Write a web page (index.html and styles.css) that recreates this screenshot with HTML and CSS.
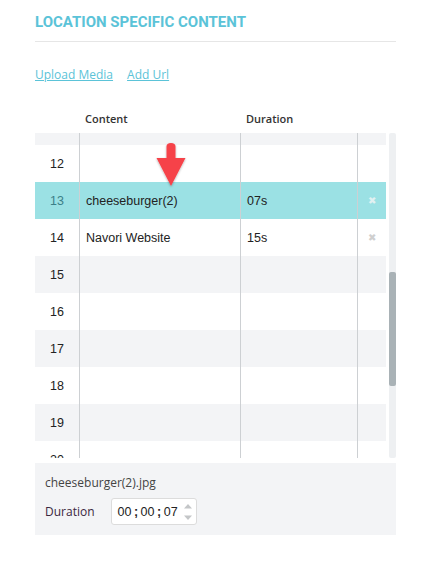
FILE: index.html
```html
<!DOCTYPE html>
<html lang="en">
<head>
    <meta charset="UTF-8">
    <meta name="viewport" content="width=device-width, initial-scale=1.0">
    <title>Location Specific Content</title>
    <link rel="stylesheet" href="styles.css">
</head>
<body>
    <div class="panel">
        <h2 class="title">LOCATION SPECIFIC CONTENT</h2>
        <div class="actions">
            <a href="#">Upload Media</a>
            <a href="#">Add Url</a>
        </div>

        <div class="grid">
            <div class="grid-main">
                <div class="head">
                    <div class="cell num"></div>
                    <div class="cell">Content</div>
                    <div class="cell">Duration</div>
                    <div class="cell act"></div>
                </div>
                <div class="viewport">
                    <div class="rows">
                        <div class="row alt"><div class="cell num"></div><div class="cell"></div><div class="cell"></div><div class="cell act"></div></div>
                        <div class="row"><div class="cell num">12</div><div class="cell"></div><div class="cell"></div><div class="cell act"></div></div>
                        <div class="row selected"><div class="cell num">13</div><div class="cell">cheeseburger(2)</div><div class="cell">07s</div><div class="cell act"><span class="remove">&#10006;</span></div></div>
                        <div class="row"><div class="cell num">14</div><div class="cell">Navori Website</div><div class="cell">15s</div><div class="cell act"><span class="remove">&#10006;</span></div></div>
                        <div class="row alt"><div class="cell num">15</div><div class="cell"></div><div class="cell"></div><div class="cell act"></div></div>
                        <div class="row"><div class="cell num">16</div><div class="cell"></div><div class="cell"></div><div class="cell act"></div></div>
                        <div class="row alt"><div class="cell num">17</div><div class="cell"></div><div class="cell"></div><div class="cell act"></div></div>
                        <div class="row"><div class="cell num">18</div><div class="cell"></div><div class="cell"></div><div class="cell act"></div></div>
                        <div class="row alt"><div class="cell num">19</div><div class="cell"></div><div class="cell"></div><div class="cell act"></div></div>
                        <div class="row"><div class="cell num">20</div><div class="cell"></div><div class="cell"></div><div class="cell act"></div></div>
                    </div>
                    <svg class="pointer" width="32" height="48" viewBox="0 0 32 48">
                        <defs>
                            <filter id="shadow" x="-30%" y="-30%" width="160%" height="160%">
                                <feDropShadow dx="0" dy="1" stdDeviation="1" flood-color="#000" flood-opacity="0.3"/>
                            </filter>
                        </defs>
                        <path d="M11.5 5.5 Q11.5 2 16 2 Q20.5 2 20.5 5.5 L20.5 17 L30.5 17 L16 45 L1.5 17 L11.5 17 Z" fill="#f6434a" filter="url(#shadow)"/>
                    </svg>
                </div>
            </div>
            <div class="scrollbar"><div class="thumb"></div></div>
        </div>

        <div class="details">
            <div class="file-name">cheeseburger(2).jpg</div>
            <div class="duration">
                <label>Duration</label>
                <div class="time-input">
                    <span>00</span><b>;</b><span>00</span><b>;</b><span>07</span>
                    <div class="spin">
                        <svg width="10" height="22" viewBox="0 0 10 22">
                            <path d="M1 7.5 L5 3 L9 7.5 Z" fill="#c4c6c8"/>
                            <path d="M1 14.5 L5 19 L9 14.5 Z" fill="#c4c6c8"/>
                        </svg>
                    </div>
                </div>
            </div>
        </div>
    </div>
</body>
</html>
```

FILE: styles.css
```css
body {
    margin: 0;
    padding: 0;
    background: #fff;
    font-family: "Open Sans", Arial, sans-serif;
    color: #333;
}
.panel {
    width: 361px;
    margin-left: 35px;
    padding-top: 12px;
}
.title {
    margin: 0;
    padding-bottom: 9px;
    border-bottom: 1px solid #e6e6e6;
    font-family: Roboto, "Open Sans", sans-serif;
    font-size: 15px;
    font-weight: 700;
    line-height: 20px;
    color: #5bc3d8;
}
.actions {
    display: flex;
    gap: 14px;
    margin-top: 24px;
    line-height: 18px;
    font-size: 12px;
}
.actions a {
    color: #5bc3d8;
    text-decoration: underline;
}
.grid {
    display: flex;
    gap: 3px;
    margin-top: 20px;
}
.grid-main {
    width: 351px;
}
.head,
.row {
    display: grid;
    grid-template-columns: 44px 161px 117px 29px;
}
.head {
    height: 29px;
    align-items: center;
    font-size: 11px;
    font-weight: 600;
    color: #333;
}
.head .cell {
    padding-left: 6px;
}
.viewport {
    position: relative;
    height: 325px;
    overflow: hidden;
}
.rows {
    margin-top: -25px;
}
.row {
    height: 37px;
    font-family: "Liberation Sans", Arial, sans-serif;
    font-size: 12.5px;
    color: #222;
}
.row.alt {
    background: #f3f4f6;
}
.row.selected {
    background: #9be1e4;
}
.row .cell {
    display: flex;
    align-items: center;
    padding-left: 6px;
    border-left: 1px solid #cdd0d3;
}
.row .cell.num {
    border-left: none;
    justify-content: center;
    padding-left: 0;
}
.row.selected .cell.num {
    color: #3b7f88;
}
.row .cell.act {
    justify-content: center;
    padding-left: 0;
}
.remove {
    font-size: 10px;
    color: #cfcfcf;
}
.row.selected .remove {
    color: #e1f1f2;
}
.pointer {
    position: absolute;
    left: 120px;
    top: 8px;
}
.scrollbar {
    width: 7px;
    margin-top: 29px;
    height: 325px;
    background: #eef0f2;
    border-radius: 2px;
}
.thumb {
    margin-top: 139px;
    height: 114px;
    background: #a9b2b6;
    border-radius: 2px;
}
.details {
    margin-top: 5px;
    height: 72px;
    box-sizing: border-box;
    padding: 11px 10px 0;
    background: #f3f4f6;
    font-size: 12px;
}
.file-name {
    line-height: 18px;
    color: #444;
}
.duration {
    display: flex;
    align-items: center;
    gap: 16px;
    margin-top: 6px;
}
.duration label {
    color: #3a2740;
}
.time-input {
    display: flex;
    align-items: center;
    width: 86px;
    height: 27px;
    box-sizing: border-box;
    padding-left: 6px;
    background: #fff;
    border: 1px solid #dcdcdc;
    border-radius: 3px;
    font-family: "Liberation Sans", Arial, sans-serif;
    font-size: 12.5px;
    color: #222;
}
.time-input b {
    padding: 0 2.5px;
}
.spin {
    margin-left: auto;
    margin-right: 3px;
    display: flex;
}
```
